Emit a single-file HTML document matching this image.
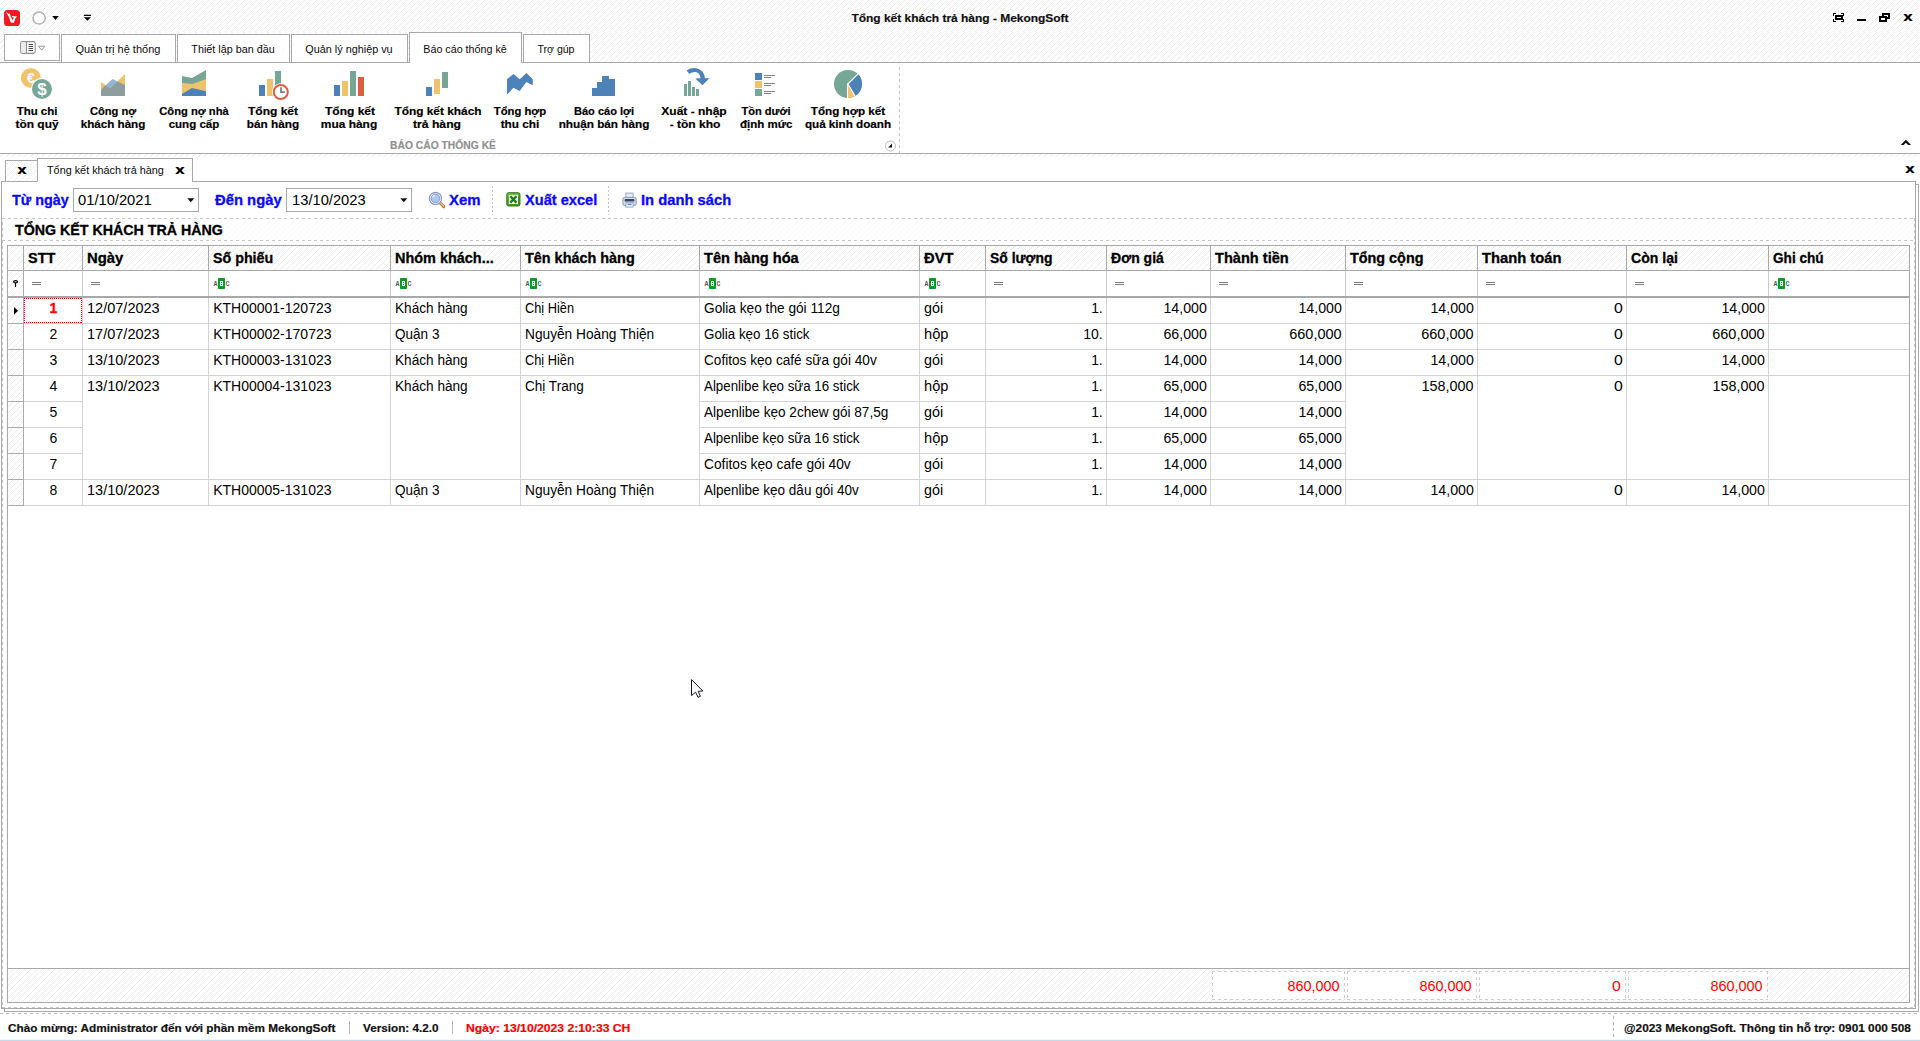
<!DOCTYPE html>
<html lang="vi"><head><meta charset="utf-8"><title>Tổng kết khách trả hàng - MekongSoft</title>
<style>
html,body{margin:0;padding:0;}
body{width:1920px;height:1041px;overflow:hidden;background:#fff;position:relative;font-family:"Liberation Sans",sans-serif;}
.t{position:absolute;white-space:nowrap;line-height:20px;}
.b{position:absolute;box-sizing:border-box;}
svg{position:absolute;overflow:visible;}
</style></head><body>

<svg width="1920" height="62" style="left:0;top:0" shape-rendering="crispEdges">
<defs>
<pattern id="h1" width="6" height="6" patternUnits="userSpaceOnUse"><path d="M4 0h1v1h-1zM3 1h1v1h-1zM2 2h1v1h-1zM1 3h1v1h-1zM0 4h1v1h-1zM5 5h1v1h-1z" fill="#e9e9e9"/></pattern>
<pattern id="h1b" width="6" height="6" patternUnits="userSpaceOnUse" patternTransform="translate(2 0)"><path d="M4 0h1v1h-1zM3 1h1v1h-1zM2 2h1v1h-1zM1 3h1v1h-1zM0 4h1v1h-1zM5 5h1v1h-1z" fill="#e9e9e9"/></pattern>
<pattern id="h2" width="6" height="6" patternUnits="userSpaceOnUse"><path d="M4 0h1v1h-1zM3 1h1v1h-1zM2 2h1v1h-1zM1 3h1v1h-1zM0 4h1v1h-1zM5 5h1v1h-1z" fill="#f8f8f8"/></pattern>
<pattern id="h1c" width="6" height="6" patternUnits="userSpaceOnUse" patternTransform="translate(4 0)"><path d="M4 0h1v1h-1zM3 1h1v1h-1zM2 2h1v1h-1zM1 3h1v1h-1zM0 4h1v1h-1zM5 5h1v1h-1z" fill="#ececec"/></pattern>
<pattern id="g0" width="6" height="6" patternUnits="userSpaceOnUse" patternTransform="translate(0 0)"><path d="M4 0h1v1h-1zM3 1h1v1h-1zM2 2h1v1h-1zM1 3h1v1h-1zM0 4h1v1h-1zM5 5h1v1h-1z" fill="#ebebeb"/></pattern><pattern id="g1" width="6" height="6" patternUnits="userSpaceOnUse" patternTransform="translate(1 0)"><path d="M4 0h1v1h-1zM3 1h1v1h-1zM2 2h1v1h-1zM1 3h1v1h-1zM0 4h1v1h-1zM5 5h1v1h-1z" fill="#ebebeb"/></pattern><pattern id="g2" width="6" height="6" patternUnits="userSpaceOnUse" patternTransform="translate(2 0)"><path d="M4 0h1v1h-1zM3 1h1v1h-1zM2 2h1v1h-1zM1 3h1v1h-1zM0 4h1v1h-1zM5 5h1v1h-1z" fill="#ebebeb"/></pattern><pattern id="g3" width="6" height="6" patternUnits="userSpaceOnUse" patternTransform="translate(3 0)"><path d="M4 0h1v1h-1zM3 1h1v1h-1zM2 2h1v1h-1zM1 3h1v1h-1zM0 4h1v1h-1zM5 5h1v1h-1z" fill="#ebebeb"/></pattern><pattern id="g4" width="6" height="6" patternUnits="userSpaceOnUse" patternTransform="translate(4 0)"><path d="M4 0h1v1h-1zM3 1h1v1h-1zM2 2h1v1h-1zM1 3h1v1h-1zM0 4h1v1h-1zM5 5h1v1h-1z" fill="#ebebeb"/></pattern><pattern id="g5" width="6" height="6" patternUnits="userSpaceOnUse" patternTransform="translate(5 0)"><path d="M4 0h1v1h-1zM3 1h1v1h-1zM2 2h1v1h-1zM1 3h1v1h-1zM0 4h1v1h-1zM5 5h1v1h-1z" fill="#ebebeb"/></pattern>
<pattern id="h1g" width="6" height="6" patternUnits="userSpaceOnUse" patternTransform="translate(-1 0)"><path d="M4 0h1v1h-1zM3 1h1v1h-1zM2 2h1v1h-1zM1 3h1v1h-1zM0 4h1v1h-1zM5 5h1v1h-1z" fill="#e9e9e9"/></pattern>
</defs>
<rect x="0" y="0" width="1920" height="32" fill="url(#h1)"/>
<rect x="0" y="32" width="1920" height="30" fill="url(#h1b)"/>
</svg>

<div class="t" style="top:8.01px;font-size:11.5px;color:#111;font-weight:bold;-webkit-text-stroke:0.2px #111;left:759.70px;width:400px;text-align:center;transform:scaleX(1.0395);transform-origin:center center;">Tổng kết khách trả hàng - MekongSoft</div>
<svg width="17" height="17" viewBox="0 0 17 17" style="left:4px;top:10px">
<rect x="0" y="0" width="16" height="16" rx="3.6" fill="#ed1c24"/>
<path d="M2 2.3L3.6 2.9L4.6 4L5.5 3.3L7.2 7.3L8.5 10.4L9.8 7.5L8.2 7.2V6L13.1 6.4L11.4 8.2L9.9 12.8H7L4.7 6.5Z" fill="#fff"/>
</svg>
<svg width="64" height="20" viewBox="30 8 64 20" style="left:30px;top:8px">
<circle cx="39.1" cy="18" r="6.1" fill="#fff" stroke="#b4b4b4" stroke-width="1.5"/>
<path d="M52.2 16.1h6.6l-3.3 3.9z" fill="#000"/>
<path d="M83.8 14.8h7.2v1.3h-7.2zM83.8 17.2h7.2l-3.6 3.5z" fill="#000"/>
</svg>
<svg width="90" height="12" viewBox="1830 12 90 12" style="left:1830px;top:12px" shape-rendering="crispEdges">
<g fill="#000">
<path d="M1833 13h3v1h-2v2h-1zM1841 13h3v3h-1v-2h-2zM1833 19h1v2h2v1h-3zM1843 19h1v3h-3v-1h2z"/>
<path d="M1835 15h8v5h-8zM1837 17v1h4v-1z" fill-rule="evenodd"/>
<rect x="1857" y="19" width="9" height="2"/>
<path d="M1882 13h8v6h-8zM1884 15v2h4v-2z" fill-rule="evenodd"/>
<path d="M1879 16h8v6h-8z"/><path d="M1881 18h4v2h-4z" fill="#fff"/>
</g></svg>
<div class="t" style="top:6.50px;font-size:13px;color:#000;font-weight:bold;font-family:'DejaVu Sans',sans-serif;transform:scaleX(1.18);left:1707.50px;width:400px;text-align:center;">x</div>
<div class="b" style="left:0px;top:62px;width:1920px;height:1px;background:#a8a8a8;"></div>
<div class="b" style="left:4px;top:34px;width:56px;height:27px;border:1px solid #a8a8a8;background:#fff;"></div>
<svg width="30" height="14" viewBox="0 0 30 14" style="left:20px;top:41px">
<rect x="0.6" y="0.6" width="14.6" height="11.8" rx="1.8" fill="#fff" stroke="#8f8f8f" stroke-width="1.1"/>
<rect x="1.4" y="1.4" width="4.4" height="10.2" fill="#ececec"/>
<path d="M6.5 0.8v11.4" stroke="#8f8f8f" stroke-width="1.1"/>
<path d="M8.6 3.5h4.4M8.6 5.5h4.4M8.6 7.5h4.4M8.6 9.5h4.4" stroke="#4a4a4a" stroke-width="1"/>
<path d="M18.4 5.2h6.4l-3.2 3.8z" fill="#fff" stroke="#8f8f8f" stroke-width="0.9"/>
</svg>
<div class="b" style="left:61px;top:34px;width:115px;height:28px;border:1px solid #a8a8a8;border-bottom:none;background:#fff;"></div>
<div class="t" style="top:39.18px;font-size:11px;color:#0a0a0a;left:-82.10px;width:400px;text-align:center;">Quản trị hệ thống</div>
<div class="b" style="left:177px;top:34px;width:113px;height:28px;border:1px solid #a8a8a8;border-bottom:none;background:#fff;"></div>
<div class="t" style="top:39.18px;font-size:11px;color:#0a0a0a;left:33.00px;width:400px;text-align:center;transform:scaleX(0.9798);transform-origin:center center;">Thiết lập ban đầu</div>
<div class="b" style="left:291px;top:34px;width:117px;height:28px;border:1px solid #a8a8a8;border-bottom:none;background:#fff;"></div>
<div class="t" style="top:39.18px;font-size:11px;color:#0a0a0a;left:149.00px;width:400px;text-align:center;transform:scaleX(0.9845);transform-origin:center center;">Quản lý nghiệp vụ</div>
<div class="b" style="left:409px;top:32px;width:113px;height:31px;border:1px solid #a8a8a8;border-bottom:none;background:#fff;"></div>
<div class="t" style="top:39.18px;font-size:11px;color:#0a0a0a;left:264.70px;width:400px;text-align:center;transform:scaleX(0.9740);transform-origin:center center;">Báo cáo thống kê</div>
<div class="b" style="left:523px;top:34px;width:67px;height:28px;border:1px solid #a8a8a8;border-bottom:none;background:#fff;"></div>
<div class="t" style="top:39.18px;font-size:11px;color:#0a0a0a;left:355.90px;width:400px;text-align:center;transform:scaleX(0.9583);transform-origin:center center;">Trợ gúp</div>
<div class="b" style="left:0px;top:63px;width:1920px;height:90px;background:#fff;"></div>
<div class="b" style="left:0px;top:153px;width:1920px;height:1px;background:#a8a8a8;"></div>
<svg width="1920" height="3" viewBox="0 154 1920 3" style="left:0px;top:154px;overflow:hidden" shape-rendering="crispEdges"><rect x="0" y="154" width="1920" height="3" fill="url(#h1b)"/></svg>
<svg width="1" height="86" viewBox="899 67 1 86" style="left:899px;top:67px;overflow:hidden" shape-rendering="crispEdges"><path d="M899.5 -11V159" stroke="#c6c6c6" stroke-width="1" stroke-dasharray="3 3" fill="none"/></svg>
<div class="t" style="top:135.08px;font-size:11px;color:#919191;font-weight:bold;-webkit-text-stroke:0.2px #919191;left:243.10px;width:400px;text-align:center;transform:scaleX(0.9375);transform-origin:center center;">BÁO CÁO THỐNG KÊ</div>
<svg width="12" height="12" viewBox="884 139.5 12 12" style="left:884px;top:139.5px">
<circle cx="890.5" cy="145.5" r="5" fill="#fff" stroke="#bdbdbd" stroke-width="1"/>
<path d="M892 143v4h-3.9z" fill="#111"/></svg>
<svg width="12" height="7" viewBox="1900 139 12 7" style="left:1900px;top:139px">
<path d="M1900.7 145.1L1905.9 139.7L1911.1 145.1H1908.2L1905.9 142.7L1903.6 145.1Z" fill="#0c0c0c"/></svg>
<svg width="900" height="36" viewBox="0 66 900 36" style="left:0;top:66px">
<circle cx="30.9" cy="78" r="10" fill="#efc36e"/>
<circle cx="41.95" cy="89" r="10.9" fill="#fff"/><circle cx="41.95" cy="89" r="10" fill="#76a796"/>
<text x="31" y="83" font-size="14" font-weight="bold" fill="#fff" text-anchor="middle" font-family="Liberation Sans,sans-serif">€</text>
<text x="42" y="95" font-size="17" font-weight="bold" fill="#fff" text-anchor="middle" font-family="Liberation Sans,sans-serif">$</text>
<path d="M101 82L110 88L125 74V96H101Z" fill="#efc36e"/>
<path d="M105.6 85.3L112.5 79L117.3 81.3L110 88Z" fill="#93b5da"/>
<path d="M101 90L105.6 85.3L110 88L117.3 81.3L125 85V96H101Z" fill="#8e9e9c"/>
<path d="M182 76L192 78L206 70V96H182Z" fill="#76a796"/>
<path d="M182 83L192.5 84L206 79V96H182Z" fill="#efc36e"/>
<path d="M182 94L192 88L206 91.2V96H182Z" fill="#4d81ba"/>
<rect x="259" y="85" width="6" height="11" fill="#4d81ba"/><rect x="267" y="79" width="6" height="17" fill="#efc36e"/><rect x="275" y="71" width="6" height="14" fill="#76a796"/>
<circle cx="280.8" cy="92" r="8.8" fill="#fff"/><circle cx="280.8" cy="92" r="7" fill="#fff" stroke="#d8603f" stroke-width="2"/>
<path d="M281 87.2v4.9h3.9" stroke="#7d7d7d" stroke-width="1.8" fill="none"/>
<rect x="334" y="85" width="6" height="11" fill="#4d81ba"/><rect x="342" y="81" width="6" height="15" fill="#efc36e"/><rect x="350" y="71" width="6" height="25" fill="#76a796"/><rect x="358" y="77" width="6" height="19" fill="#d8603f"/>
<rect x="426" y="87" width="6" height="9" fill="#4d81ba"/><rect x="434" y="79" width="6" height="15" fill="#efc36e"/><rect x="442" y="72" width="6" height="16" fill="#76a796"/>
<path d="M507 79.3L513.4 74L519.7 79.3L526.4 73L532.8 79.3V85.3L526.4 82.1L519.7 90.9L513.4 87.8L507 94.8Z" fill="#4d81ba"/>
<path d="M592 96V88H597V82H602V76H609V79H615V96Z" fill="#4d81ba"/>
<rect x="684" y="84" width="3" height="12" fill="#76a796"/><rect x="688" y="81" width="3" height="15" fill="#76a796"/><rect x="692" y="87" width="3" height="9" fill="#76a796"/><rect x="696" y="89" width="3" height="7" fill="#76a796"/>
<path d="M686.6 70.6C689 68.6 691.5 67.9 694 67.9C700 67.9 704.6 72 705 78.3L709.5 78.3L702.5 85.3L695.3 78.4L700.6 78.3C700.2 74.6 698 72.1 695 72.1C693 72.1 691 72.8 689.4 73.9Z" fill="#4d81ba"/>
<rect x="755" y="73" width="7" height="7" fill="#4d81ba"/><rect x="755" y="81" width="7" height="7" fill="#efc36e"/><rect x="755" y="89" width="7" height="7" fill="#76a796"/>
<path d="M764 75.5h11M764 77.5h7M764 83.5h11M764 85.5h7M764 91.5h11M764 93.5h7" stroke="#828282" stroke-width="1"/>
<circle cx="848" cy="84" r="14" fill="#76a796"/>
<path d="M848 84L857.9 74.1A14 14 0 0 1 855 96.12Z" fill="#4d81ba"/>
<path d="M848 84L855 96.12A14 14 0 0 1 848 98Z" fill="#efc36e"/>
<path d="M847.5 83.5V98.6M847.4 84.5L858.6 73.3M847.5 83.2L855.8 97.4" stroke="#fff" stroke-width="1.1" fill="none"/>
</svg>
<div class="t" style="top:101.01px;font-size:11.5px;color:#000;font-weight:bold;-webkit-text-stroke:0.2px #000;left:-162.75px;width:400px;text-align:center;transform:scaleX(0.9953);transform-origin:center center;">Thu chi</div>
<div class="t" style="top:114.01px;font-size:11.5px;color:#000;font-weight:bold;-webkit-text-stroke:0.2px #000;left:-163.50px;width:400px;text-align:center;transform:scaleX(1.0402);transform-origin:center center;">tồn quỹ</div>
<div class="t" style="top:101.01px;font-size:11.5px;color:#000;font-weight:bold;-webkit-text-stroke:0.2px #000;left:-87.50px;width:400px;text-align:center;transform:scaleX(0.9669);transform-origin:center center;">Công nợ</div>
<div class="t" style="top:114.01px;font-size:11.5px;color:#000;font-weight:bold;-webkit-text-stroke:0.2px #000;left:-87.30px;width:400px;text-align:center;transform:scaleX(1.0124);transform-origin:center center;">khách hàng</div>
<div class="t" style="top:101.01px;font-size:11.5px;color:#000;font-weight:bold;-webkit-text-stroke:0.2px #000;left:-5.60px;width:400px;text-align:center;transform:scaleX(0.9724);transform-origin:center center;">Công nợ nhà</div>
<div class="t" style="top:114.01px;font-size:11.5px;color:#000;font-weight:bold;-webkit-text-stroke:0.2px #000;left:-6.00px;width:400px;text-align:center;transform:scaleX(1.0043);transform-origin:center center;">cung cấp</div>
<div class="t" style="top:101.01px;font-size:11.5px;color:#000;font-weight:bold;-webkit-text-stroke:0.2px #000;left:73.00px;width:400px;text-align:center;transform:scaleX(1.0434);transform-origin:center center;">Tổng kết</div>
<div class="t" style="top:114.01px;font-size:11.5px;color:#000;font-weight:bold;-webkit-text-stroke:0.2px #000;left:73.20px;width:400px;text-align:center;transform:scaleX(1.0249);transform-origin:center center;">bán hàng</div>
<div class="t" style="top:101.01px;font-size:11.5px;color:#000;font-weight:bold;-webkit-text-stroke:0.2px #000;left:149.50px;width:400px;text-align:center;transform:scaleX(1.0434);transform-origin:center center;">Tổng kết</div>
<div class="t" style="top:114.01px;font-size:11.5px;color:#000;font-weight:bold;-webkit-text-stroke:0.2px #000;left:148.90px;width:400px;text-align:center;transform:scaleX(1.0384);transform-origin:center center;">mua hàng</div>
<div class="t" style="top:101.01px;font-size:11.5px;color:#000;font-weight:bold;-webkit-text-stroke:0.2px #000;left:237.50px;width:400px;text-align:center;transform:scaleX(1.0313);transform-origin:center center;">Tổng kết khách</div>
<div class="t" style="top:114.01px;font-size:11.5px;color:#000;font-weight:bold;-webkit-text-stroke:0.2px #000;left:237.00px;width:400px;text-align:center;transform:scaleX(1.0579);transform-origin:center center;">trả hàng</div>
<div class="t" style="top:101.01px;font-size:11.5px;color:#000;font-weight:bold;-webkit-text-stroke:0.2px #000;left:320.20px;width:400px;text-align:center;transform:scaleX(0.9789);transform-origin:center center;">Tổng hợp</div>
<div class="t" style="top:114.01px;font-size:11.5px;color:#000;font-weight:bold;-webkit-text-stroke:0.2px #000;left:320.00px;width:400px;text-align:center;transform:scaleX(1.0264);transform-origin:center center;">thu chi</div>
<div class="t" style="top:101.01px;font-size:11.5px;color:#000;font-weight:bold;-webkit-text-stroke:0.2px #000;left:403.70px;width:400px;text-align:center;transform:scaleX(0.9600);transform-origin:center center;">Báo cáo lợi</div>
<div class="t" style="top:114.01px;font-size:11.5px;color:#000;font-weight:bold;-webkit-text-stroke:0.2px #000;left:404.00px;width:400px;text-align:center;transform:scaleX(1.0213);transform-origin:center center;">nhuận bán hàng</div>
<div class="t" style="top:101.01px;font-size:11.5px;color:#000;font-weight:bold;-webkit-text-stroke:0.2px #000;left:494.30px;width:400px;text-align:center;transform:scaleX(1.0443);transform-origin:center center;">Xuất - nhập</div>
<div class="t" style="top:114.01px;font-size:11.5px;color:#000;font-weight:bold;-webkit-text-stroke:0.2px #000;left:494.70px;width:400px;text-align:center;transform:scaleX(1.0444);transform-origin:center center;">- tồn kho</div>
<div class="t" style="top:101.01px;font-size:11.5px;color:#000;font-weight:bold;-webkit-text-stroke:0.2px #000;left:565.80px;width:400px;text-align:center;transform:scaleX(0.9608);transform-origin:center center;">Tồn dưới</div>
<div class="t" style="top:114.01px;font-size:11.5px;color:#000;font-weight:bold;-webkit-text-stroke:0.2px #000;left:566.20px;width:400px;text-align:center;">định mức</div>
<div class="t" style="top:101.01px;font-size:11.5px;color:#000;font-weight:bold;-webkit-text-stroke:0.2px #000;left:648.20px;width:400px;text-align:center;transform:scaleX(1.0144);transform-origin:center center;">Tổng hợp kết</div>
<div class="t" style="top:114.01px;font-size:11.5px;color:#000;font-weight:bold;-webkit-text-stroke:0.2px #000;left:648.00px;width:400px;text-align:center;transform:scaleX(1.0143);transform-origin:center center;">quả kinh doanh</div>
<div class="b" style="left:5px;top:160px;width:33px;height:22px;border:1px solid #a8a8a8;border-bottom:none;"></div>
<svg width="31" height="20" viewBox="6 161 31 20" style="left:6px;top:161px;overflow:hidden" shape-rendering="crispEdges"><rect x="6" y="161" width="31" height="20" fill="url(#h1c)"/></svg>
<div class="t" style="top:159.50px;font-size:13px;color:#000;font-weight:bold;font-family:'DejaVu Sans',sans-serif;transform:scaleX(1.18);left:-178.50px;width:400px;text-align:center;">x</div>
<div class="b" style="left:4px;top:1011px;width:1915px;height:1px;background:#a8a8a8;"></div>
<div class="b" style="left:1918px;top:184px;width:1px;height:828px;background:#a8a8a8;"></div>
<div class="b" style="left:4px;top:1008px;width:1px;height:4px;background:#a8a8a8;"></div>
<div class="b" style="left:1916px;top:184px;width:3px;height:1px;background:#a8a8a8;"></div>
<div class="b" style="left:1px;top:181px;width:1915px;height:828px;border:1px solid #a8a8a8;background:#fff;"></div>
<div class="b" style="left:37px;top:158px;width:156px;height:24px;border:1px solid #a8a8a8;border-bottom:none;background:#fff;"></div>
<div class="t" style="top:159.98px;font-size:11px;color:#0a0a0a;left:46.9px;transform:scaleX(0.9845);transform-origin:left center;">Tổng kết khách trả hàng</div>
<div class="t" style="top:159.50px;font-size:13px;color:#000;font-weight:bold;font-family:'DejaVu Sans',sans-serif;transform:scaleX(1.18);left:-19.70px;width:400px;text-align:center;">x</div>
<div class="t" style="top:158.60px;font-size:13px;color:#000;font-weight:bold;font-family:'DejaVu Sans',sans-serif;transform:scaleX(1.18);left:1709.60px;width:400px;text-align:center;">x</div>
<svg width="1" height="790" viewBox="2 218 1 790" style="left:2px;top:218px;overflow:hidden" shape-rendering="crispEdges"><path d="M2.5 -12V1014" stroke="#c6c6c6" stroke-width="1" stroke-dasharray="3 3" fill="none"/></svg>
<svg width="1" height="790" viewBox="1914 218 1 790" style="left:1914px;top:218px;overflow:hidden" shape-rendering="crispEdges"><path d="M1914.5 -10V1014" stroke="#c6c6c6" stroke-width="1" stroke-dasharray="3 3" fill="none"/></svg>
<svg width="1913" height="1" viewBox="2 1007 1913 1" style="left:2px;top:1007px;overflow:hidden" shape-rendering="crispEdges"><path d="M-4 1007.5H1921" stroke="#c6c6c6" stroke-width="1" stroke-dasharray="3 3" fill="none"/></svg>
<div class="t" style="top:189.64px;font-size:14px;color:#0a0af5;font-weight:bold;-webkit-text-stroke:0.3px #0a0af5;left:11.5px;transform:scaleX(1.0260);transform-origin:left center;">Từ ngày</div>
<div class="b" style="left:73px;top:188px;width:126px;height:24px;border:1px solid #a8a8a8;background:#fff;"></div>
<div class="t" style="top:189.84px;font-size:14px;color:#000;left:78px;transform:scaleX(1.0517);transform-origin:left center;">01/10/2021</div>
<svg width="8" height="5" viewBox="0 0 8 5" style="left:186.5px;top:198px"><path d="M0.3 0.2h7L3.8 4.2z" fill="#111"/></svg>
<div class="t" style="top:189.64px;font-size:14px;color:#0a0af5;font-weight:bold;-webkit-text-stroke:0.3px #0a0af5;left:215px;transform:scaleX(1.0585);transform-origin:left center;">Đến ngày</div>
<div class="b" style="left:286px;top:188px;width:126px;height:24px;border:1px solid #a8a8a8;background:#fff;"></div>
<div class="t" style="top:189.84px;font-size:14px;color:#000;left:291.5px;transform:scaleX(1.0517);transform-origin:left center;">13/10/2023</div>
<svg width="8" height="5" viewBox="0 0 8 5" style="left:399.5px;top:198px"><path d="M0.3 0.2h7L3.8 4.2z" fill="#111"/></svg>
<svg width="18" height="18" viewBox="428 191 18 18" style="left:428px;top:191px">
<path d="M440.2 203l3.6 3.6" stroke="#b8722c" stroke-width="3" stroke-linecap="round"/>
<path d="M440.4 203l3.3 3.3" stroke="#f2c486" stroke-width="1.2" stroke-linecap="round"/>
<circle cx="435.5" cy="198.4" r="6.1" fill="#eef3fb" stroke="#8d99bd" stroke-width="1.2"/>
<circle cx="435.5" cy="198.4" r="4.3" fill="#a9c9f2" stroke="#7f94c2" stroke-width="0.9"/>
<path d="M432.6 197.6a3 3 0 0 1 2.6-2.3" stroke="#e8f2fd" stroke-width="1.3" fill="none"/></svg>
<div class="t" style="top:189.64px;font-size:14px;color:#0a0af5;font-weight:bold;-webkit-text-stroke:0.3px #0a0af5;left:449px;transform:scaleX(1.0650);transform-origin:left center;">Xem</div>
<svg width="1" height="29" viewBox="492 186 1 29" style="left:492px;top:186px;overflow:hidden" shape-rendering="crispEdges"><path d="M492.5 -6V221" stroke="#c2c2c2" stroke-width="1" stroke-dasharray="2 2" fill="none"/></svg>
<svg width="15" height="15" viewBox="505.5 192 15 15" style="left:505.5px;top:192px">
<rect x="506.3" y="192.7" width="13.2" height="13.3" rx="1.8" fill="#3e9a1f" stroke="#2a6f12" stroke-width="0.9"/>
<rect x="506.9" y="193.2" width="12" height="4" rx="1.4" fill="#5cbf2c" opacity="0.8"/>
<rect x="508.3" y="194.8" width="9.2" height="9.2" fill="#eef0ea"/>
<path d="M509.8 196.2l6.2 6.4M516 196.2l-6.2 6.4" stroke="#23791a" stroke-width="2.3"/></svg>
<div class="t" style="top:189.64px;font-size:14px;color:#0a0af5;font-weight:bold;-webkit-text-stroke:0.3px #0a0af5;left:525px;transform:scaleX(1.0424);transform-origin:left center;">Xuất excel</div>
<svg width="1" height="29" viewBox="608 186 1 29" style="left:608px;top:186px;overflow:hidden" shape-rendering="crispEdges"><path d="M608.5 -6V221" stroke="#c2c2c2" stroke-width="1" stroke-dasharray="2 2" fill="none"/></svg>
<svg width="16" height="16" viewBox="621.5 191.5 16 16" style="left:621.5px;top:191.5px">
<rect x="625.4" y="192.6" width="7.2" height="7" fill="#e6ecf7" stroke="#8e9ec4" stroke-width="0.9"/>
<rect x="622.4" y="196.9" width="13.3" height="8" rx="1.4" fill="#d3dbec" stroke="#8090ba" stroke-width="0.9"/>
<rect x="624.2" y="198.6" width="9.7" height="2.4" rx="0.6" fill="#3a4560"/>
<rect x="625.4" y="202.3" width="7.2" height="4.3" fill="#f8fafd" stroke="#8e9ec4" stroke-width="0.9"/>
<rect x="627.2" y="203.1" width="3.8" height="1.5" fill="#4a93dc"/></svg>
<div class="t" style="top:189.64px;font-size:14px;color:#0a0af5;font-weight:bold;-webkit-text-stroke:0.3px #0a0af5;left:641.2px;transform:scaleX(1.0540);transform-origin:left center;">In danh sách</div>
<svg width="1911" height="21" viewBox="3 219 1911 21" style="left:3px;top:219px;overflow:hidden" shape-rendering="crispEdges"><rect x="3" y="219" width="1911" height="21" fill="url(#h2)"/></svg>
<svg width="1913" height="1" viewBox="2 218 1913 1" style="left:2px;top:218px;overflow:hidden" shape-rendering="crispEdges"><path d="M-4 218.5H1921" stroke="#c6c6c6" stroke-width="1" stroke-dasharray="3 3" fill="none"/></svg>
<svg width="1913" height="1" viewBox="2 240 1913 1" style="left:2px;top:240px;overflow:hidden" shape-rendering="crispEdges"><path d="M-4 240.5H1921" stroke="#c6c6c6" stroke-width="1" stroke-dasharray="3 3" fill="none"/></svg>
<div class="t" style="top:220.14px;font-size:14px;color:#000;font-weight:bold;-webkit-text-stroke:0.3px #000;left:14.7px;transform:scaleX(1.0164);transform-origin:left center;">TỔNG KẾT KHÁCH TRẢ HÀNG</div>
<svg width="15" height="24" viewBox="8 246 15 24" style="left:8px;top:246px;overflow:hidden" shape-rendering="crispEdges"><rect x="8" y="246" width="15" height="24" fill="url(#g2)"/></svg>
<svg width="58" height="24" viewBox="24 246 58 24" style="left:24px;top:246px;overflow:hidden" shape-rendering="crispEdges"><rect x="24" y="246" width="58" height="24" fill="url(#g0)"/></svg>
<svg width="125" height="24" viewBox="83 246 125 24" style="left:83px;top:246px;overflow:hidden" shape-rendering="crispEdges"><rect x="83" y="246" width="125" height="24" fill="url(#g5)"/></svg>
<svg width="181" height="24" viewBox="209 246 181 24" style="left:209px;top:246px;overflow:hidden" shape-rendering="crispEdges"><rect x="209" y="246" width="181" height="24" fill="url(#g5)"/></svg>
<svg width="129" height="24" viewBox="391 246 129 24" style="left:391px;top:246px;overflow:hidden" shape-rendering="crispEdges"><rect x="391" y="246" width="129" height="24" fill="url(#g1)"/></svg>
<svg width="178" height="24" viewBox="521 246 178 24" style="left:521px;top:246px;overflow:hidden" shape-rendering="crispEdges"><rect x="521" y="246" width="178" height="24" fill="url(#g5)"/></svg>
<svg width="219" height="24" viewBox="700 246 219 24" style="left:700px;top:246px;overflow:hidden" shape-rendering="crispEdges"><rect x="700" y="246" width="219" height="24" fill="url(#g4)"/></svg>
<svg width="65" height="24" viewBox="920 246 65 24" style="left:920px;top:246px;overflow:hidden" shape-rendering="crispEdges"><rect x="920" y="246" width="65" height="24" fill="url(#g2)"/></svg>
<svg width="120" height="24" viewBox="986 246 120 24" style="left:986px;top:246px;overflow:hidden" shape-rendering="crispEdges"><rect x="986" y="246" width="120" height="24" fill="url(#g2)"/></svg>
<svg width="103" height="24" viewBox="1107 246 103 24" style="left:1107px;top:246px;overflow:hidden" shape-rendering="crispEdges"><rect x="1107" y="246" width="103" height="24" fill="url(#g3)"/></svg>
<svg width="134" height="24" viewBox="1211 246 134 24" style="left:1211px;top:246px;overflow:hidden" shape-rendering="crispEdges"><rect x="1211" y="246" width="134" height="24" fill="url(#g5)"/></svg>
<svg width="131" height="24" viewBox="1346 246 131 24" style="left:1346px;top:246px;overflow:hidden" shape-rendering="crispEdges"><rect x="1346" y="246" width="131" height="24" fill="url(#g2)"/></svg>
<svg width="148" height="24" viewBox="1478 246 148 24" style="left:1478px;top:246px;overflow:hidden" shape-rendering="crispEdges"><rect x="1478" y="246" width="148" height="24" fill="url(#g2)"/></svg>
<svg width="141" height="24" viewBox="1627 246 141 24" style="left:1627px;top:246px;overflow:hidden" shape-rendering="crispEdges"><rect x="1627" y="246" width="141" height="24" fill="url(#g1)"/></svg>
<svg width="140" height="24" viewBox="1769 246 140 24" style="left:1769px;top:246px;overflow:hidden" shape-rendering="crispEdges"><rect x="1769" y="246" width="140" height="24" fill="url(#g5)"/></svg>
<svg width="15" height="25" viewBox="8 271 15 25" style="left:8px;top:271px;overflow:hidden" shape-rendering="crispEdges"><rect x="8" y="271" width="15" height="25" fill="url(#g3)"/></svg>
<svg width="15" height="25" viewBox="8 298 15 25" style="left:8px;top:298px;overflow:hidden" shape-rendering="crispEdges"><rect x="8" y="298" width="15" height="25" fill="url(#g0)"/></svg>
<svg width="15" height="25" viewBox="8 324 15 25" style="left:8px;top:324px;overflow:hidden" shape-rendering="crispEdges"><rect x="8" y="324" width="15" height="25" fill="url(#g2)"/></svg>
<svg width="15" height="25" viewBox="8 350 15 25" style="left:8px;top:350px;overflow:hidden" shape-rendering="crispEdges"><rect x="8" y="350" width="15" height="25" fill="url(#g4)"/></svg>
<svg width="15" height="25" viewBox="8 376 15 25" style="left:8px;top:376px;overflow:hidden" shape-rendering="crispEdges"><rect x="8" y="376" width="15" height="25" fill="url(#g0)"/></svg>
<svg width="15" height="25" viewBox="8 402 15 25" style="left:8px;top:402px;overflow:hidden" shape-rendering="crispEdges"><rect x="8" y="402" width="15" height="25" fill="url(#g2)"/></svg>
<svg width="15" height="25" viewBox="8 428 15 25" style="left:8px;top:428px;overflow:hidden" shape-rendering="crispEdges"><rect x="8" y="428" width="15" height="25" fill="url(#g4)"/></svg>
<svg width="15" height="25" viewBox="8 454 15 25" style="left:8px;top:454px;overflow:hidden" shape-rendering="crispEdges"><rect x="8" y="454" width="15" height="25" fill="url(#g0)"/></svg>
<svg width="15" height="25" viewBox="8 480 15 25" style="left:8px;top:480px;overflow:hidden" shape-rendering="crispEdges"><rect x="8" y="480" width="15" height="25" fill="url(#g2)"/></svg>
<svg width="1901" height="33" viewBox="8 969 1901 33" style="left:8px;top:969px;overflow:hidden" shape-rendering="crispEdges"><rect x="8" y="969" width="1901" height="33" fill="url(#g5)"/></svg>
<div class="b" style="left:7px;top:245px;width:1903px;height:758px;border:1px solid #a8a8a8;"></div>
<div class="b" style="left:8px;top:270px;width:1901px;height:1px;background:#a8a8a8;"></div>
<div class="b" style="left:8px;top:296px;width:1901px;height:2px;background:#a8a8a8;"></div>
<div class="b" style="left:8px;top:968px;width:1901px;height:1px;background:#a8a8a8;"></div>
<div class="b" style="left:23px;top:246px;width:1px;height:24px;background:#a8a8a8;"></div>
<div class="b" style="left:23px;top:271px;width:1px;height:25px;background:#a8a8a8;"></div>
<div class="t" style="top:247.74px;font-size:14px;color:#000;font-weight:bold;-webkit-text-stroke:0.3px #000;left:28.1px;transform:scaleX(1.0320);transform-origin:left center;">STT</div>
<svg width="9" height="3" viewBox="0 0 9 3" style="left:32px;top:282px" shape-rendering="crispEdges"><path d="M0 0h9v1H0zM0 2h9v1H0z" fill="#7a7a7a"/></svg>
<div class="b" style="left:82px;top:246px;width:1px;height:24px;background:#a8a8a8;"></div>
<div class="b" style="left:82px;top:271px;width:1px;height:25px;background:#cbcbcb;"></div>
<div class="t" style="top:247.74px;font-size:14px;color:#000;font-weight:bold;-webkit-text-stroke:0.3px #000;left:87.1px;transform:scaleX(1.0603);transform-origin:left center;">Ngày</div>
<svg width="9" height="3" viewBox="0 0 9 3" style="left:91px;top:282px" shape-rendering="crispEdges"><path d="M0 0h9v1H0zM0 2h9v1H0z" fill="#7a7a7a"/></svg>
<div class="b" style="left:208px;top:246px;width:1px;height:24px;background:#a8a8a8;"></div>
<div class="b" style="left:208px;top:271px;width:1px;height:25px;background:#cbcbcb;"></div>
<div class="t" style="top:247.74px;font-size:14px;color:#000;font-weight:bold;-webkit-text-stroke:0.3px #000;left:213.1px;transform:scaleX(1.0182);transform-origin:left center;">Số phiếu</div>
<svg width="16" height="11" viewBox="0 0 16 11" style="left:213px;top:278px"><rect x="5" y="0" width="7" height="11" rx="0.8" fill="#0b9b20"/><rect x="7" y="3" width="3" height="5" fill="#fff"/><rect x="8" y="4" width="1" height="1" fill="#0b9b20"/><rect x="8" y="6" width="1" height="1" fill="#0b9b20"/><text x="0.4" y="8" font-size="6.6" font-weight="bold" fill="#5a5a5a" font-family="Liberation Mono,monospace">A</text><text x="12.5" y="8" font-size="6.6" font-weight="bold" fill="#5a5a5a" font-family="Liberation Mono,monospace">C</text></svg>
<div class="b" style="left:390px;top:246px;width:1px;height:24px;background:#a8a8a8;"></div>
<div class="b" style="left:390px;top:271px;width:1px;height:25px;background:#cbcbcb;"></div>
<div class="t" style="top:247.74px;font-size:14px;color:#000;font-weight:bold;-webkit-text-stroke:0.3px #000;left:395.1px;transform:scaleX(1.0315);transform-origin:left center;">Nhóm khách...</div>
<svg width="16" height="11" viewBox="0 0 16 11" style="left:395px;top:278px"><rect x="5" y="0" width="7" height="11" rx="0.8" fill="#0b9b20"/><rect x="7" y="3" width="3" height="5" fill="#fff"/><rect x="8" y="4" width="1" height="1" fill="#0b9b20"/><rect x="8" y="6" width="1" height="1" fill="#0b9b20"/><text x="0.4" y="8" font-size="6.6" font-weight="bold" fill="#5a5a5a" font-family="Liberation Mono,monospace">A</text><text x="12.5" y="8" font-size="6.6" font-weight="bold" fill="#5a5a5a" font-family="Liberation Mono,monospace">C</text></svg>
<div class="b" style="left:520px;top:246px;width:1px;height:24px;background:#a8a8a8;"></div>
<div class="b" style="left:520px;top:271px;width:1px;height:25px;background:#cbcbcb;"></div>
<div class="t" style="top:247.74px;font-size:14px;color:#000;font-weight:bold;-webkit-text-stroke:0.3px #000;left:525.1px;transform:scaleX(1.0293);transform-origin:left center;">Tên khách hàng</div>
<svg width="16" height="11" viewBox="0 0 16 11" style="left:525px;top:278px"><rect x="5" y="0" width="7" height="11" rx="0.8" fill="#0b9b20"/><rect x="7" y="3" width="3" height="5" fill="#fff"/><rect x="8" y="4" width="1" height="1" fill="#0b9b20"/><rect x="8" y="6" width="1" height="1" fill="#0b9b20"/><text x="0.4" y="8" font-size="6.6" font-weight="bold" fill="#5a5a5a" font-family="Liberation Mono,monospace">A</text><text x="12.5" y="8" font-size="6.6" font-weight="bold" fill="#5a5a5a" font-family="Liberation Mono,monospace">C</text></svg>
<div class="b" style="left:699px;top:246px;width:1px;height:24px;background:#a8a8a8;"></div>
<div class="b" style="left:699px;top:271px;width:1px;height:25px;background:#cbcbcb;"></div>
<div class="t" style="top:247.74px;font-size:14px;color:#000;font-weight:bold;-webkit-text-stroke:0.3px #000;left:704.1px;transform:scaleX(1.0407);transform-origin:left center;">Tên hàng hóa</div>
<svg width="16" height="11" viewBox="0 0 16 11" style="left:704px;top:278px"><rect x="5" y="0" width="7" height="11" rx="0.8" fill="#0b9b20"/><rect x="7" y="3" width="3" height="5" fill="#fff"/><rect x="8" y="4" width="1" height="1" fill="#0b9b20"/><rect x="8" y="6" width="1" height="1" fill="#0b9b20"/><text x="0.4" y="8" font-size="6.6" font-weight="bold" fill="#5a5a5a" font-family="Liberation Mono,monospace">A</text><text x="12.5" y="8" font-size="6.6" font-weight="bold" fill="#5a5a5a" font-family="Liberation Mono,monospace">C</text></svg>
<div class="b" style="left:919px;top:246px;width:1px;height:24px;background:#a8a8a8;"></div>
<div class="b" style="left:919px;top:271px;width:1px;height:25px;background:#cbcbcb;"></div>
<div class="t" style="top:247.74px;font-size:14px;color:#000;font-weight:bold;-webkit-text-stroke:0.3px #000;left:924.1px;transform:scaleX(1.0518);transform-origin:left center;">ĐVT</div>
<svg width="16" height="11" viewBox="0 0 16 11" style="left:924px;top:278px"><rect x="5" y="0" width="7" height="11" rx="0.8" fill="#0b9b20"/><rect x="7" y="3" width="3" height="5" fill="#fff"/><rect x="8" y="4" width="1" height="1" fill="#0b9b20"/><rect x="8" y="6" width="1" height="1" fill="#0b9b20"/><text x="0.4" y="8" font-size="6.6" font-weight="bold" fill="#5a5a5a" font-family="Liberation Mono,monospace">A</text><text x="12.5" y="8" font-size="6.6" font-weight="bold" fill="#5a5a5a" font-family="Liberation Mono,monospace">C</text></svg>
<div class="b" style="left:985px;top:246px;width:1px;height:24px;background:#a8a8a8;"></div>
<div class="b" style="left:985px;top:271px;width:1px;height:25px;background:#cbcbcb;"></div>
<div class="t" style="top:247.74px;font-size:14px;color:#000;font-weight:bold;-webkit-text-stroke:0.3px #000;left:990.1px;transform:scaleX(0.9932);transform-origin:left center;">Số lượng</div>
<svg width="9" height="3" viewBox="0 0 9 3" style="left:994px;top:282px" shape-rendering="crispEdges"><path d="M0 0h9v1H0zM0 2h9v1H0z" fill="#7a7a7a"/></svg>
<div class="b" style="left:1106px;top:246px;width:1px;height:24px;background:#a8a8a8;"></div>
<div class="b" style="left:1106px;top:271px;width:1px;height:25px;background:#cbcbcb;"></div>
<div class="t" style="top:247.74px;font-size:14px;color:#000;font-weight:bold;-webkit-text-stroke:0.3px #000;left:1111.1px;">Đơn giá</div>
<svg width="9" height="3" viewBox="0 0 9 3" style="left:1115px;top:282px" shape-rendering="crispEdges"><path d="M0 0h9v1H0zM0 2h9v1H0z" fill="#7a7a7a"/></svg>
<div class="b" style="left:1210px;top:246px;width:1px;height:24px;background:#a8a8a8;"></div>
<div class="b" style="left:1210px;top:271px;width:1px;height:25px;background:#cbcbcb;"></div>
<div class="t" style="top:247.74px;font-size:14px;color:#000;font-weight:bold;-webkit-text-stroke:0.3px #000;left:1215.1px;transform:scaleX(1.0412);transform-origin:left center;">Thành tiền</div>
<svg width="9" height="3" viewBox="0 0 9 3" style="left:1219px;top:282px" shape-rendering="crispEdges"><path d="M0 0h9v1H0zM0 2h9v1H0z" fill="#7a7a7a"/></svg>
<div class="b" style="left:1345px;top:246px;width:1px;height:24px;background:#a8a8a8;"></div>
<div class="b" style="left:1345px;top:271px;width:1px;height:25px;background:#cbcbcb;"></div>
<div class="t" style="top:247.74px;font-size:14px;color:#000;font-weight:bold;-webkit-text-stroke:0.3px #000;left:1350.1px;transform:scaleX(1.0266);transform-origin:left center;">Tổng cộng</div>
<svg width="9" height="3" viewBox="0 0 9 3" style="left:1354px;top:282px" shape-rendering="crispEdges"><path d="M0 0h9v1H0zM0 2h9v1H0z" fill="#7a7a7a"/></svg>
<div class="b" style="left:1477px;top:246px;width:1px;height:24px;background:#a8a8a8;"></div>
<div class="b" style="left:1477px;top:271px;width:1px;height:25px;background:#cbcbcb;"></div>
<div class="t" style="top:247.74px;font-size:14px;color:#000;font-weight:bold;-webkit-text-stroke:0.3px #000;left:1482.1px;transform:scaleX(1.0532);transform-origin:left center;">Thanh toán</div>
<svg width="9" height="3" viewBox="0 0 9 3" style="left:1486px;top:282px" shape-rendering="crispEdges"><path d="M0 0h9v1H0zM0 2h9v1H0z" fill="#7a7a7a"/></svg>
<div class="b" style="left:1626px;top:246px;width:1px;height:24px;background:#a8a8a8;"></div>
<div class="b" style="left:1626px;top:271px;width:1px;height:25px;background:#cbcbcb;"></div>
<div class="t" style="top:247.74px;font-size:14px;color:#000;font-weight:bold;-webkit-text-stroke:0.3px #000;left:1631.1px;transform:scaleX(1.0049);transform-origin:left center;">Còn lại</div>
<svg width="9" height="3" viewBox="0 0 9 3" style="left:1635px;top:282px" shape-rendering="crispEdges"><path d="M0 0h9v1H0zM0 2h9v1H0z" fill="#7a7a7a"/></svg>
<div class="b" style="left:1768px;top:246px;width:1px;height:24px;background:#a8a8a8;"></div>
<div class="b" style="left:1768px;top:271px;width:1px;height:25px;background:#cbcbcb;"></div>
<div class="t" style="top:247.74px;font-size:14px;color:#000;font-weight:bold;-webkit-text-stroke:0.3px #000;left:1773.1px;transform:scaleX(0.9727);transform-origin:left center;">Ghi chú</div>
<svg width="16" height="11" viewBox="0 0 16 11" style="left:1773px;top:278px"><rect x="5" y="0" width="7" height="11" rx="0.8" fill="#0b9b20"/><rect x="7" y="3" width="3" height="5" fill="#fff"/><rect x="8" y="4" width="1" height="1" fill="#0b9b20"/><rect x="8" y="6" width="1" height="1" fill="#0b9b20"/><text x="0.4" y="8" font-size="6.6" font-weight="bold" fill="#5a5a5a" font-family="Liberation Mono,monospace">A</text><text x="12.5" y="8" font-size="6.6" font-weight="bold" fill="#5a5a5a" font-family="Liberation Mono,monospace">C</text></svg>
<svg width="7" height="9" viewBox="12 279 7 9" style="left:12px;top:279px"><ellipse cx="15.55" cy="281.7" rx="1.9" ry="1.15" fill="#fff" stroke="#000" stroke-width="1.3"/><path d="M15.5 283v4" stroke="#000" stroke-width="1.2"/></svg>
<div class="b" style="left:8px;top:323px;width:15px;height:1px;background:#ababab;"></div>
<div class="b" style="left:24px;top:323px;width:58px;height:1px;background:#d3d3d3;"></div>
<div class="b" style="left:83px;top:323px;width:125px;height:1px;background:#d3d3d3;"></div>
<div class="b" style="left:209px;top:323px;width:181px;height:1px;background:#d3d3d3;"></div>
<div class="b" style="left:391px;top:323px;width:129px;height:1px;background:#d3d3d3;"></div>
<div class="b" style="left:521px;top:323px;width:178px;height:1px;background:#d3d3d3;"></div>
<div class="b" style="left:700px;top:323px;width:219px;height:1px;background:#d3d3d3;"></div>
<div class="b" style="left:920px;top:323px;width:65px;height:1px;background:#d3d3d3;"></div>
<div class="b" style="left:986px;top:323px;width:120px;height:1px;background:#d3d3d3;"></div>
<div class="b" style="left:1107px;top:323px;width:103px;height:1px;background:#d3d3d3;"></div>
<div class="b" style="left:1211px;top:323px;width:134px;height:1px;background:#d3d3d3;"></div>
<div class="b" style="left:1346px;top:323px;width:131px;height:1px;background:#d3d3d3;"></div>
<div class="b" style="left:1478px;top:323px;width:148px;height:1px;background:#d3d3d3;"></div>
<div class="b" style="left:1627px;top:323px;width:141px;height:1px;background:#d3d3d3;"></div>
<div class="b" style="left:1769px;top:323px;width:140px;height:1px;background:#d3d3d3;"></div>
<div class="t" style="top:298.34px;font-size:14px;color:#ff0000;font-weight:bold;-webkit-text-stroke:0.3px #ff0000;left:-146.50px;width:400px;text-align:center;">1</div>
<div class="t" style="top:298.34px;font-size:14px;color:#000;left:87.2px;transform:scaleX(1.0374);transform-origin:left center;">12/07/2023</div>
<div class="t" style="top:298.34px;font-size:14px;color:#000;left:213.2px;">KTH00001-120723</div>
<div class="t" style="top:298.34px;font-size:14px;color:#000;left:395.2px;transform:scaleX(0.9728);transform-origin:left center;">Khách hàng</div>
<div class="t" style="top:298.34px;font-size:14px;color:#000;left:525.2px;transform:scaleX(0.9143);transform-origin:left center;">Chị Hiền</div>
<div class="t" style="top:298.34px;font-size:14px;color:#000;left:704.2px;transform:scaleX(0.9771);transform-origin:left center;">Golia kẹo the gói 112g</div>
<div class="t" style="top:298.34px;font-size:14px;color:#000;left:924.2px;transform:scaleX(1.0221);transform-origin:left center;">gói</div>
<div class="t" style="top:298.34px;font-size:14px;color:#000;right:817.40px;transform:scaleX(0.9840);transform-origin:right center;">1.</div>
<div class="t" style="top:298.34px;font-size:14px;color:#000;right:713.40px;transform:scaleX(1.0134);transform-origin:right center;">14,000</div>
<div class="t" style="top:298.34px;font-size:14px;color:#000;right:578.40px;transform:scaleX(1.0134);transform-origin:right center;">14,000</div>
<div class="t" style="top:298.34px;font-size:14px;color:#000;right:446.40px;transform:scaleX(1.0134);transform-origin:right center;">14,000</div>
<div class="t" style="top:298.34px;font-size:14px;color:#000;right:297.40px;transform:scaleX(1.1287);transform-origin:right center;">0</div>
<div class="t" style="top:298.34px;font-size:14px;color:#000;right:155.40px;transform:scaleX(1.0134);transform-origin:right center;">14,000</div>
<div class="b" style="left:8px;top:349px;width:15px;height:1px;background:#ababab;"></div>
<div class="b" style="left:24px;top:349px;width:58px;height:1px;background:#d3d3d3;"></div>
<div class="b" style="left:83px;top:349px;width:125px;height:1px;background:#d3d3d3;"></div>
<div class="b" style="left:209px;top:349px;width:181px;height:1px;background:#d3d3d3;"></div>
<div class="b" style="left:391px;top:349px;width:129px;height:1px;background:#d3d3d3;"></div>
<div class="b" style="left:521px;top:349px;width:178px;height:1px;background:#d3d3d3;"></div>
<div class="b" style="left:700px;top:349px;width:219px;height:1px;background:#d3d3d3;"></div>
<div class="b" style="left:920px;top:349px;width:65px;height:1px;background:#d3d3d3;"></div>
<div class="b" style="left:986px;top:349px;width:120px;height:1px;background:#d3d3d3;"></div>
<div class="b" style="left:1107px;top:349px;width:103px;height:1px;background:#d3d3d3;"></div>
<div class="b" style="left:1211px;top:349px;width:134px;height:1px;background:#d3d3d3;"></div>
<div class="b" style="left:1346px;top:349px;width:131px;height:1px;background:#d3d3d3;"></div>
<div class="b" style="left:1478px;top:349px;width:148px;height:1px;background:#d3d3d3;"></div>
<div class="b" style="left:1627px;top:349px;width:141px;height:1px;background:#d3d3d3;"></div>
<div class="b" style="left:1769px;top:349px;width:140px;height:1px;background:#d3d3d3;"></div>
<div class="t" style="top:324.34px;font-size:14px;color:#000;left:-146.70px;width:400px;text-align:center;">2</div>
<div class="t" style="top:324.34px;font-size:14px;color:#000;left:87.2px;transform:scaleX(1.0374);transform-origin:left center;">17/07/2023</div>
<div class="t" style="top:324.34px;font-size:14px;color:#000;left:213.2px;">KTH00002-170723</div>
<div class="t" style="top:324.34px;font-size:14px;color:#000;left:395.2px;transform:scaleX(0.9676);transform-origin:left center;">Quận 3</div>
<div class="t" style="top:324.34px;font-size:14px;color:#000;left:525.2px;transform:scaleX(0.9783);transform-origin:left center;">Nguyễn Hoàng Thiện</div>
<div class="t" style="top:324.34px;font-size:14px;color:#000;left:704.2px;transform:scaleX(0.9548);transform-origin:left center;">Golia kẹo 16 stick</div>
<div class="t" style="top:324.34px;font-size:14px;color:#000;left:924.2px;transform:scaleX(1.0445);transform-origin:left center;">hộp</div>
<div class="t" style="top:324.34px;font-size:14px;color:#000;right:817.40px;">10.</div>
<div class="t" style="top:324.34px;font-size:14px;color:#000;right:713.40px;transform:scaleX(1.0134);transform-origin:right center;">66,000</div>
<div class="t" style="top:324.34px;font-size:14px;color:#000;right:578.40px;transform:scaleX(1.0354);transform-origin:right center;">660,000</div>
<div class="t" style="top:324.34px;font-size:14px;color:#000;right:446.40px;transform:scaleX(1.0354);transform-origin:right center;">660,000</div>
<div class="t" style="top:324.34px;font-size:14px;color:#000;right:297.40px;transform:scaleX(1.1287);transform-origin:right center;">0</div>
<div class="t" style="top:324.34px;font-size:14px;color:#000;right:155.40px;transform:scaleX(1.0354);transform-origin:right center;">660,000</div>
<div class="b" style="left:8px;top:375px;width:15px;height:1px;background:#ababab;"></div>
<div class="b" style="left:24px;top:375px;width:58px;height:1px;background:#d3d3d3;"></div>
<div class="b" style="left:83px;top:375px;width:125px;height:1px;background:#d3d3d3;"></div>
<div class="b" style="left:209px;top:375px;width:181px;height:1px;background:#d3d3d3;"></div>
<div class="b" style="left:391px;top:375px;width:129px;height:1px;background:#d3d3d3;"></div>
<div class="b" style="left:521px;top:375px;width:178px;height:1px;background:#d3d3d3;"></div>
<div class="b" style="left:700px;top:375px;width:219px;height:1px;background:#d3d3d3;"></div>
<div class="b" style="left:920px;top:375px;width:65px;height:1px;background:#d3d3d3;"></div>
<div class="b" style="left:986px;top:375px;width:120px;height:1px;background:#d3d3d3;"></div>
<div class="b" style="left:1107px;top:375px;width:103px;height:1px;background:#d3d3d3;"></div>
<div class="b" style="left:1211px;top:375px;width:134px;height:1px;background:#d3d3d3;"></div>
<div class="b" style="left:1346px;top:375px;width:131px;height:1px;background:#d3d3d3;"></div>
<div class="b" style="left:1478px;top:375px;width:148px;height:1px;background:#d3d3d3;"></div>
<div class="b" style="left:1627px;top:375px;width:141px;height:1px;background:#d3d3d3;"></div>
<div class="b" style="left:1769px;top:375px;width:140px;height:1px;background:#d3d3d3;"></div>
<div class="t" style="top:350.34px;font-size:14px;color:#000;left:-146.70px;width:400px;text-align:center;">3</div>
<div class="t" style="top:350.34px;font-size:14px;color:#000;left:87.2px;transform:scaleX(1.0374);transform-origin:left center;">13/10/2023</div>
<div class="t" style="top:350.34px;font-size:14px;color:#000;left:213.2px;">KTH00003-131023</div>
<div class="t" style="top:350.34px;font-size:14px;color:#000;left:395.2px;transform:scaleX(0.9728);transform-origin:left center;">Khách hàng</div>
<div class="t" style="top:350.34px;font-size:14px;color:#000;left:525.2px;transform:scaleX(0.9143);transform-origin:left center;">Chị Hiền</div>
<div class="t" style="top:350.34px;font-size:14px;color:#000;left:704.2px;transform:scaleX(0.9731);transform-origin:left center;">Cofitos kẹo café sữa gói 40v</div>
<div class="t" style="top:350.34px;font-size:14px;color:#000;left:924.2px;transform:scaleX(1.0221);transform-origin:left center;">gói</div>
<div class="t" style="top:350.34px;font-size:14px;color:#000;right:817.40px;transform:scaleX(0.9840);transform-origin:right center;">1.</div>
<div class="t" style="top:350.34px;font-size:14px;color:#000;right:713.40px;transform:scaleX(1.0134);transform-origin:right center;">14,000</div>
<div class="t" style="top:350.34px;font-size:14px;color:#000;right:578.40px;transform:scaleX(1.0134);transform-origin:right center;">14,000</div>
<div class="t" style="top:350.34px;font-size:14px;color:#000;right:446.40px;transform:scaleX(1.0134);transform-origin:right center;">14,000</div>
<div class="t" style="top:350.34px;font-size:14px;color:#000;right:297.40px;transform:scaleX(1.1287);transform-origin:right center;">0</div>
<div class="t" style="top:350.34px;font-size:14px;color:#000;right:155.40px;transform:scaleX(1.0134);transform-origin:right center;">14,000</div>
<div class="b" style="left:8px;top:401px;width:15px;height:1px;background:#ababab;"></div>
<div class="b" style="left:24px;top:401px;width:58px;height:1px;background:#d3d3d3;"></div>
<div class="b" style="left:700px;top:401px;width:219px;height:1px;background:#d3d3d3;"></div>
<div class="b" style="left:920px;top:401px;width:65px;height:1px;background:#d3d3d3;"></div>
<div class="b" style="left:986px;top:401px;width:120px;height:1px;background:#d3d3d3;"></div>
<div class="b" style="left:1107px;top:401px;width:103px;height:1px;background:#d3d3d3;"></div>
<div class="b" style="left:1211px;top:401px;width:134px;height:1px;background:#d3d3d3;"></div>
<div class="t" style="top:376.34px;font-size:14px;color:#000;left:-146.70px;width:400px;text-align:center;">4</div>
<div class="t" style="top:376.34px;font-size:14px;color:#000;left:87.2px;transform:scaleX(1.0374);transform-origin:left center;">13/10/2023</div>
<div class="t" style="top:376.34px;font-size:14px;color:#000;left:213.2px;">KTH00004-131023</div>
<div class="t" style="top:376.34px;font-size:14px;color:#000;left:395.2px;transform:scaleX(0.9728);transform-origin:left center;">Khách hàng</div>
<div class="t" style="top:376.34px;font-size:14px;color:#000;left:525.2px;transform:scaleX(0.9686);transform-origin:left center;">Chị Trang</div>
<div class="t" style="top:376.34px;font-size:14px;color:#000;left:704.2px;transform:scaleX(0.9513);transform-origin:left center;">Alpenlibe kẹo sữa 16 stick</div>
<div class="t" style="top:376.34px;font-size:14px;color:#000;left:924.2px;transform:scaleX(1.0445);transform-origin:left center;">hộp</div>
<div class="t" style="top:376.34px;font-size:14px;color:#000;right:817.40px;transform:scaleX(0.9840);transform-origin:right center;">1.</div>
<div class="t" style="top:376.34px;font-size:14px;color:#000;right:713.40px;transform:scaleX(1.0134);transform-origin:right center;">65,000</div>
<div class="t" style="top:376.34px;font-size:14px;color:#000;right:578.40px;transform:scaleX(1.0134);transform-origin:right center;">65,000</div>
<div class="t" style="top:376.34px;font-size:14px;color:#000;right:446.40px;transform:scaleX(1.0275);transform-origin:right center;">158,000</div>
<div class="t" style="top:376.34px;font-size:14px;color:#000;right:297.40px;transform:scaleX(1.1287);transform-origin:right center;">0</div>
<div class="t" style="top:376.34px;font-size:14px;color:#000;right:155.40px;transform:scaleX(1.0275);transform-origin:right center;">158,000</div>
<div class="b" style="left:8px;top:427px;width:15px;height:1px;background:#ababab;"></div>
<div class="b" style="left:24px;top:427px;width:58px;height:1px;background:#d3d3d3;"></div>
<div class="b" style="left:700px;top:427px;width:219px;height:1px;background:#d3d3d3;"></div>
<div class="b" style="left:920px;top:427px;width:65px;height:1px;background:#d3d3d3;"></div>
<div class="b" style="left:986px;top:427px;width:120px;height:1px;background:#d3d3d3;"></div>
<div class="b" style="left:1107px;top:427px;width:103px;height:1px;background:#d3d3d3;"></div>
<div class="b" style="left:1211px;top:427px;width:134px;height:1px;background:#d3d3d3;"></div>
<div class="t" style="top:402.34px;font-size:14px;color:#000;left:-146.70px;width:400px;text-align:center;">5</div>
<div class="t" style="top:402.34px;font-size:14px;color:#000;left:704.2px;transform:scaleX(0.9704);transform-origin:left center;">Alpenlibe kẹo 2chew gói 87,5g</div>
<div class="t" style="top:402.34px;font-size:14px;color:#000;left:924.2px;transform:scaleX(1.0221);transform-origin:left center;">gói</div>
<div class="t" style="top:402.34px;font-size:14px;color:#000;right:817.40px;transform:scaleX(0.9840);transform-origin:right center;">1.</div>
<div class="t" style="top:402.34px;font-size:14px;color:#000;right:713.40px;transform:scaleX(1.0134);transform-origin:right center;">14,000</div>
<div class="t" style="top:402.34px;font-size:14px;color:#000;right:578.40px;transform:scaleX(1.0134);transform-origin:right center;">14,000</div>
<div class="b" style="left:8px;top:453px;width:15px;height:1px;background:#ababab;"></div>
<div class="b" style="left:24px;top:453px;width:58px;height:1px;background:#d3d3d3;"></div>
<div class="b" style="left:700px;top:453px;width:219px;height:1px;background:#d3d3d3;"></div>
<div class="b" style="left:920px;top:453px;width:65px;height:1px;background:#d3d3d3;"></div>
<div class="b" style="left:986px;top:453px;width:120px;height:1px;background:#d3d3d3;"></div>
<div class="b" style="left:1107px;top:453px;width:103px;height:1px;background:#d3d3d3;"></div>
<div class="b" style="left:1211px;top:453px;width:134px;height:1px;background:#d3d3d3;"></div>
<div class="t" style="top:428.34px;font-size:14px;color:#000;left:-146.70px;width:400px;text-align:center;">6</div>
<div class="t" style="top:428.34px;font-size:14px;color:#000;left:704.2px;transform:scaleX(0.9513);transform-origin:left center;">Alpenlibe kẹo sữa 16 stick</div>
<div class="t" style="top:428.34px;font-size:14px;color:#000;left:924.2px;transform:scaleX(1.0445);transform-origin:left center;">hộp</div>
<div class="t" style="top:428.34px;font-size:14px;color:#000;right:817.40px;transform:scaleX(0.9840);transform-origin:right center;">1.</div>
<div class="t" style="top:428.34px;font-size:14px;color:#000;right:713.40px;transform:scaleX(1.0134);transform-origin:right center;">65,000</div>
<div class="t" style="top:428.34px;font-size:14px;color:#000;right:578.40px;transform:scaleX(1.0134);transform-origin:right center;">65,000</div>
<div class="b" style="left:8px;top:479px;width:15px;height:1px;background:#ababab;"></div>
<div class="b" style="left:24px;top:479px;width:58px;height:1px;background:#d3d3d3;"></div>
<div class="b" style="left:83px;top:479px;width:125px;height:1px;background:#d3d3d3;"></div>
<div class="b" style="left:209px;top:479px;width:181px;height:1px;background:#d3d3d3;"></div>
<div class="b" style="left:391px;top:479px;width:129px;height:1px;background:#d3d3d3;"></div>
<div class="b" style="left:521px;top:479px;width:178px;height:1px;background:#d3d3d3;"></div>
<div class="b" style="left:700px;top:479px;width:219px;height:1px;background:#d3d3d3;"></div>
<div class="b" style="left:920px;top:479px;width:65px;height:1px;background:#d3d3d3;"></div>
<div class="b" style="left:986px;top:479px;width:120px;height:1px;background:#d3d3d3;"></div>
<div class="b" style="left:1107px;top:479px;width:103px;height:1px;background:#d3d3d3;"></div>
<div class="b" style="left:1211px;top:479px;width:134px;height:1px;background:#d3d3d3;"></div>
<div class="b" style="left:1346px;top:479px;width:131px;height:1px;background:#d3d3d3;"></div>
<div class="b" style="left:1478px;top:479px;width:148px;height:1px;background:#d3d3d3;"></div>
<div class="b" style="left:1627px;top:479px;width:141px;height:1px;background:#d3d3d3;"></div>
<div class="b" style="left:1769px;top:479px;width:140px;height:1px;background:#d3d3d3;"></div>
<div class="t" style="top:454.34px;font-size:14px;color:#000;left:-146.70px;width:400px;text-align:center;">7</div>
<div class="t" style="top:454.34px;font-size:14px;color:#000;left:704.2px;transform:scaleX(0.9818);transform-origin:left center;">Cofitos kẹo cafe gói 40v</div>
<div class="t" style="top:454.34px;font-size:14px;color:#000;left:924.2px;transform:scaleX(1.0221);transform-origin:left center;">gói</div>
<div class="t" style="top:454.34px;font-size:14px;color:#000;right:817.40px;transform:scaleX(0.9840);transform-origin:right center;">1.</div>
<div class="t" style="top:454.34px;font-size:14px;color:#000;right:713.40px;transform:scaleX(1.0134);transform-origin:right center;">14,000</div>
<div class="t" style="top:454.34px;font-size:14px;color:#000;right:578.40px;transform:scaleX(1.0134);transform-origin:right center;">14,000</div>
<div class="b" style="left:8px;top:505px;width:15px;height:1px;background:#ababab;"></div>
<div class="b" style="left:24px;top:505px;width:58px;height:1px;background:#d3d3d3;"></div>
<div class="b" style="left:83px;top:505px;width:125px;height:1px;background:#d3d3d3;"></div>
<div class="b" style="left:209px;top:505px;width:181px;height:1px;background:#d3d3d3;"></div>
<div class="b" style="left:391px;top:505px;width:129px;height:1px;background:#d3d3d3;"></div>
<div class="b" style="left:521px;top:505px;width:178px;height:1px;background:#d3d3d3;"></div>
<div class="b" style="left:700px;top:505px;width:219px;height:1px;background:#d3d3d3;"></div>
<div class="b" style="left:920px;top:505px;width:65px;height:1px;background:#d3d3d3;"></div>
<div class="b" style="left:986px;top:505px;width:120px;height:1px;background:#d3d3d3;"></div>
<div class="b" style="left:1107px;top:505px;width:103px;height:1px;background:#d3d3d3;"></div>
<div class="b" style="left:1211px;top:505px;width:134px;height:1px;background:#d3d3d3;"></div>
<div class="b" style="left:1346px;top:505px;width:131px;height:1px;background:#d3d3d3;"></div>
<div class="b" style="left:1478px;top:505px;width:148px;height:1px;background:#d3d3d3;"></div>
<div class="b" style="left:1627px;top:505px;width:141px;height:1px;background:#d3d3d3;"></div>
<div class="b" style="left:1769px;top:505px;width:140px;height:1px;background:#d3d3d3;"></div>
<div class="t" style="top:480.34px;font-size:14px;color:#000;left:-146.70px;width:400px;text-align:center;">8</div>
<div class="t" style="top:480.34px;font-size:14px;color:#000;left:87.2px;transform:scaleX(1.0374);transform-origin:left center;">13/10/2023</div>
<div class="t" style="top:480.34px;font-size:14px;color:#000;left:213.2px;">KTH00005-131023</div>
<div class="t" style="top:480.34px;font-size:14px;color:#000;left:395.2px;transform:scaleX(0.9676);transform-origin:left center;">Quận 3</div>
<div class="t" style="top:480.34px;font-size:14px;color:#000;left:525.2px;transform:scaleX(0.9783);transform-origin:left center;">Nguyễn Hoàng Thiện</div>
<div class="t" style="top:480.34px;font-size:14px;color:#000;left:704.2px;transform:scaleX(0.9648);transform-origin:left center;">Alpenlibe kẹo dâu gói 40v</div>
<div class="t" style="top:480.34px;font-size:14px;color:#000;left:924.2px;transform:scaleX(1.0221);transform-origin:left center;">gói</div>
<div class="t" style="top:480.34px;font-size:14px;color:#000;right:817.40px;transform:scaleX(0.9840);transform-origin:right center;">1.</div>
<div class="t" style="top:480.34px;font-size:14px;color:#000;right:713.40px;transform:scaleX(1.0134);transform-origin:right center;">14,000</div>
<div class="t" style="top:480.34px;font-size:14px;color:#000;right:578.40px;transform:scaleX(1.0134);transform-origin:right center;">14,000</div>
<div class="t" style="top:480.34px;font-size:14px;color:#000;right:446.40px;transform:scaleX(1.0134);transform-origin:right center;">14,000</div>
<div class="t" style="top:480.34px;font-size:14px;color:#000;right:297.40px;transform:scaleX(1.1287);transform-origin:right center;">0</div>
<div class="t" style="top:480.34px;font-size:14px;color:#000;right:155.40px;transform:scaleX(1.0134);transform-origin:right center;">14,000</div>
<div class="b" style="left:82px;top:298px;width:1px;height:208px;background:#d3d3d3;"></div>
<div class="b" style="left:208px;top:298px;width:1px;height:208px;background:#d3d3d3;"></div>
<div class="b" style="left:390px;top:298px;width:1px;height:208px;background:#d3d3d3;"></div>
<div class="b" style="left:520px;top:298px;width:1px;height:208px;background:#d3d3d3;"></div>
<div class="b" style="left:699px;top:298px;width:1px;height:208px;background:#d3d3d3;"></div>
<div class="b" style="left:919px;top:298px;width:1px;height:208px;background:#d3d3d3;"></div>
<div class="b" style="left:985px;top:298px;width:1px;height:208px;background:#d3d3d3;"></div>
<div class="b" style="left:1106px;top:298px;width:1px;height:208px;background:#d3d3d3;"></div>
<div class="b" style="left:1210px;top:298px;width:1px;height:208px;background:#d3d3d3;"></div>
<div class="b" style="left:1345px;top:298px;width:1px;height:208px;background:#d3d3d3;"></div>
<div class="b" style="left:1477px;top:298px;width:1px;height:208px;background:#d3d3d3;"></div>
<div class="b" style="left:1626px;top:298px;width:1px;height:208px;background:#d3d3d3;"></div>
<div class="b" style="left:1768px;top:298px;width:1px;height:208px;background:#d3d3d3;"></div>
<div class="b" style="left:23px;top:298px;width:1px;height:208px;background:#ababab;"></div>
<svg width="58" height="25" viewBox="0 0 58 25" style="left:24px;top:298px" shape-rendering="crispEdges"><path d="M0 0.5H58M0 24.5H58M0.5 0V25M57.5 0V25" stroke="#ff0000" stroke-width="1" stroke-dasharray="1 1" fill="none"/></svg>
<svg width="5" height="8" viewBox="14 307 5 8" style="left:14px;top:307px"><path d="M14 307l4.1 3.7-4.1 3.7z" fill="#000"/></svg>
<div class="b" style="left:1212px;top:971px;width:133px;height:29px;background:#fff;"></div>
<svg width="133" height="1" viewBox="1212 971 133 1" style="left:1212px;top:971px;overflow:hidden" shape-rendering="crispEdges"><path d="M-6 971.5H1351" stroke="#cdcdcd" stroke-width="1" stroke-dasharray="3 3" fill="none"/></svg>
<svg width="133" height="1" viewBox="1212 999 133 1" style="left:1212px;top:999px;overflow:hidden" shape-rendering="crispEdges"><path d="M-6 999.5H1351" stroke="#cdcdcd" stroke-width="1" stroke-dasharray="3 3" fill="none"/></svg>
<svg width="1" height="29" viewBox="1212 971 1 29" style="left:1212px;top:971px;overflow:hidden" shape-rendering="crispEdges"><path d="M1212.5 -7V1006" stroke="#cdcdcd" stroke-width="1" stroke-dasharray="3 3" fill="none"/></svg>
<svg width="1" height="29" viewBox="1344 971 1 29" style="left:1344px;top:971px;overflow:hidden" shape-rendering="crispEdges"><path d="M1344.5 -7V1006" stroke="#cdcdcd" stroke-width="1" stroke-dasharray="3 3" fill="none"/></svg>
<div class="t" style="top:975.74px;font-size:14px;color:#ff0000;right:580.50px;transform:scaleX(1.0295);transform-origin:right center;">860,000</div>
<div class="b" style="left:1347px;top:971px;width:130px;height:29px;background:#fff;"></div>
<svg width="130" height="1" viewBox="1347 971 130 1" style="left:1347px;top:971px;overflow:hidden" shape-rendering="crispEdges"><path d="M-3 971.5H1483" stroke="#cdcdcd" stroke-width="1" stroke-dasharray="3 3" fill="none"/></svg>
<svg width="130" height="1" viewBox="1347 999 130 1" style="left:1347px;top:999px;overflow:hidden" shape-rendering="crispEdges"><path d="M-3 999.5H1483" stroke="#cdcdcd" stroke-width="1" stroke-dasharray="3 3" fill="none"/></svg>
<svg width="1" height="29" viewBox="1347 971 1 29" style="left:1347px;top:971px;overflow:hidden" shape-rendering="crispEdges"><path d="M1347.5 -7V1006" stroke="#cdcdcd" stroke-width="1" stroke-dasharray="3 3" fill="none"/></svg>
<svg width="1" height="29" viewBox="1476 971 1 29" style="left:1476px;top:971px;overflow:hidden" shape-rendering="crispEdges"><path d="M1476.5 -7V1006" stroke="#cdcdcd" stroke-width="1" stroke-dasharray="3 3" fill="none"/></svg>
<div class="t" style="top:975.74px;font-size:14px;color:#ff0000;right:448.20px;transform:scaleX(1.0295);transform-origin:right center;">860,000</div>
<div class="b" style="left:1479px;top:971px;width:147px;height:29px;background:#fff;"></div>
<svg width="147" height="1" viewBox="1479 971 147 1" style="left:1479px;top:971px;overflow:hidden" shape-rendering="crispEdges"><path d="M-3 971.5H1632" stroke="#cdcdcd" stroke-width="1" stroke-dasharray="3 3" fill="none"/></svg>
<svg width="147" height="1" viewBox="1479 999 147 1" style="left:1479px;top:999px;overflow:hidden" shape-rendering="crispEdges"><path d="M-3 999.5H1632" stroke="#cdcdcd" stroke-width="1" stroke-dasharray="3 3" fill="none"/></svg>
<svg width="1" height="29" viewBox="1479 971 1 29" style="left:1479px;top:971px;overflow:hidden" shape-rendering="crispEdges"><path d="M1479.5 -7V1006" stroke="#cdcdcd" stroke-width="1" stroke-dasharray="3 3" fill="none"/></svg>
<svg width="1" height="29" viewBox="1625 971 1 29" style="left:1625px;top:971px;overflow:hidden" shape-rendering="crispEdges"><path d="M1625.5 -7V1006" stroke="#cdcdcd" stroke-width="1" stroke-dasharray="3 3" fill="none"/></svg>
<div class="t" style="top:975.74px;font-size:14px;color:#ff0000;right:299.30px;transform:scaleX(1.1287);transform-origin:right center;">0</div>
<div class="b" style="left:1628px;top:971px;width:140px;height:29px;background:#fff;"></div>
<svg width="140" height="1" viewBox="1628 971 140 1" style="left:1628px;top:971px;overflow:hidden" shape-rendering="crispEdges"><path d="M-4 971.5H1774" stroke="#cdcdcd" stroke-width="1" stroke-dasharray="3 3" fill="none"/></svg>
<svg width="140" height="1" viewBox="1628 999 140 1" style="left:1628px;top:999px;overflow:hidden" shape-rendering="crispEdges"><path d="M-4 999.5H1774" stroke="#cdcdcd" stroke-width="1" stroke-dasharray="3 3" fill="none"/></svg>
<svg width="1" height="29" viewBox="1628 971 1 29" style="left:1628px;top:971px;overflow:hidden" shape-rendering="crispEdges"><path d="M1628.5 -7V1006" stroke="#cdcdcd" stroke-width="1" stroke-dasharray="3 3" fill="none"/></svg>
<svg width="1" height="29" viewBox="1767 971 1 29" style="left:1767px;top:971px;overflow:hidden" shape-rendering="crispEdges"><path d="M1767.5 -7V1006" stroke="#cdcdcd" stroke-width="1" stroke-dasharray="3 3" fill="none"/></svg>
<div class="t" style="top:975.74px;font-size:14px;color:#ff0000;right:157.60px;transform:scaleX(1.0295);transform-origin:right center;">860,000</div>
<svg width="1920" height="1" viewBox="0 1013 1920 1" style="left:0px;top:1013px;overflow:hidden" shape-rendering="crispEdges"><path d="M-6 1013.5H1926" stroke="#b9b9b9" stroke-width="1" stroke-dasharray="3 3" fill="none"/></svg>
<div class="t" style="top:1018.01px;font-size:11.5px;color:#111;font-weight:bold;-webkit-text-stroke:0.2px #111;left:8px;transform:scaleX(1.0204);transform-origin:left center;">Chào mừng: Administrator đến với phần mềm MekongSoft</div>
<div class="b" style="left:349px;top:1021px;width:1px;height:13px;background:#b8b8b8;"></div>
<div class="t" style="top:1018.01px;font-size:11.5px;color:#111;font-weight:bold;-webkit-text-stroke:0.2px #111;left:362.7px;transform:scaleX(1.0181);transform-origin:left center;">Version: 4.2.0</div>
<div class="b" style="left:452px;top:1021px;width:1px;height:13px;background:#b8b8b8;"></div>
<div class="t" style="top:1018.01px;font-size:11.5px;color:#ff0000;font-weight:bold;-webkit-text-stroke:0.2px #ff0000;left:465.9px;transform:scaleX(1.0583);transform-origin:left center;">Ngày: 13/10/2023 2:10:33 CH</div>
<svg width="1" height="26" viewBox="1613 1015 1 26" style="left:1613px;top:1015px;overflow:hidden" shape-rendering="crispEdges"><path d="M1613.5 -10V1047" stroke="#b5b5b5" stroke-width="1" stroke-dasharray="3 3" fill="none"/></svg>
<div class="t" style="top:1018.01px;font-size:11.5px;color:#111;font-weight:bold;-webkit-text-stroke:0.2px #111;right:9.20px;transform:scaleX(1.0285);transform-origin:right center;">@2023 MekongSoft. Thông tin hỗ trợ: 0901 000 508</div>
<div class="b" style="left:0px;top:1039px;width:1920px;height:1px;background:#f1f6fa;"></div>
<div class="b" style="left:0px;top:1040px;width:1920px;height:1px;background:#c6d9e9;"></div>
<svg width="16" height="22" viewBox="689 677 16 22" style="left:689px;top:677px">
<path d="M691.5 679.6V695.6L695.6 692.2L698 697.3L700.4 696.3L698.2 691.3L702.8 691Z" fill="#fff" stroke="#16161f" stroke-width="1" stroke-linejoin="round"/></svg>
</body></html>
